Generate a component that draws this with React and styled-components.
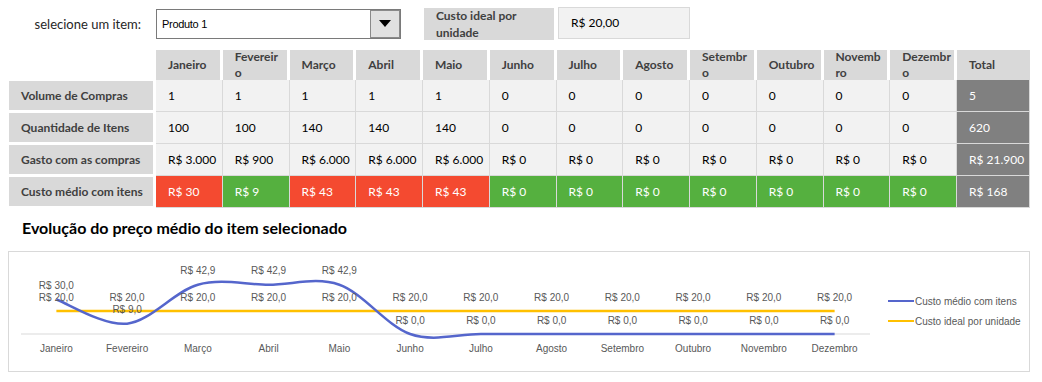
import React from 'react';
import styled, { createGlobalStyle } from 'styled-components';

const meses = ['Janeiro', 'Fevereiro', 'Março', 'Abril', 'Maio', 'Junho', 'Julho', 'Agosto', 'Setembro', 'Outubro', 'Novembro', 'Dezembro'];
// como o Excel quebra os títulos nas colunas estreitas
const titulos = ['Janeiro', 'Fevereir\no', 'Março', 'Abril', 'Maio', 'Junho', 'Julho', 'Agosto', 'Setembr\no', 'Outubro', 'Novemb\nro', 'Dezembr\no'];

const linhas = [
    { nome: 'Volume de Compras', valores: ['1', '1', '1', '1', '1', '0', '0', '0', '0', '0', '0', '0'], total: '5' },
    { nome: 'Quantidade de Itens', valores: ['100', '100', '140', '140', '140', '0', '0', '0', '0', '0', '0', '0'], total: '620' },
    { nome: 'Gasto com as compras', valores: ['R$ 3.000', 'R$ 900', 'R$ 6.000', 'R$ 6.000', 'R$ 6.000', 'R$ 0', 'R$ 0', 'R$ 0', 'R$ 0', 'R$ 0', 'R$ 0', 'R$ 0'], total: 'R$ 21.900' },
];

const medio = [30, 9, 300 / 7, 300 / 7, 300 / 7, 0, 0, 0, 0, 0, 0, 0];
const ideal = 20;

const GlobalStyle = createGlobalStyle`
    body {
        margin: 0;
        background: #ffffff;
        font-family: Lato, "Noto Sans", sans-serif;
    }
`;

export default function App() {
    return (
        <>
            <GlobalStyle />
            <Pagina>
                <Topo>
                    <Rotulo>selecione um item:</Rotulo>
                    <Select>
                        <SelectTexto>Produto 1</SelectTexto>
                        <SelectBotao>
                            <Seta />
                        </SelectBotao>
                    </Select>
                    <CaixaCusto>Custo ideal por unidade</CaixaCusto>
                    <CaixaValor>R$ 20,00</CaixaValor>
                </Topo>

                <Tabela>
                    <Vazio />
                    {titulos.map((t) => <Cabecalho key={t}>{t}</Cabecalho>)}
                    <Cabecalho $total>Total</Cabecalho>

                    {linhas.map((l) => (
                        <React.Fragment key={l.nome}>
                            <NomeLinha>{l.nome}</NomeLinha>
                            {l.valores.map((v, i) => <Celula key={i}>{v}</Celula>)}
                            <Celula $tipo="total">{l.total}</Celula>
                        </React.Fragment>
                    ))}

                    <NomeLinha>Custo médio com itens</NomeLinha>
                    {medio.map((v, i) => (
                        <Celula key={i} $tipo={v > ideal ? 'ruim' : 'bom'}>R$ {Math.round(v)}</Celula>
                    ))}
                    <Celula $tipo="total">R$ 168</Celula>
                </Tabela>

                <Titulo>Evolução do preço médio do item selecionado</Titulo>
                <Grafico />
            </Pagina>
        </>
    );
}

//grafico de linhas suavizado, no estilo do Excel
function Grafico() {
    const x0 = 12;
    const x1 = 861;
    const passo = (x1 - x0) / 12;
    const eixoY = 82;
    const cx = (i) => x0 + passo * (i + 0.5);
    const cy = (v) => eixoY - v * 1.15;
    const fmt = (v) => 'R$ ' + v.toFixed(1).replace('.', ',');

    const pts = medio.map((v, i) => [cx(i), cy(v)]);
    let d = `M${pts[0][0]},${pts[0][1]}`;
    for (let i = 0; i < pts.length - 1; i++) {
        const p0 = pts[i - 1] || pts[i];
        const p1 = pts[i];
        const p2 = pts[i + 1];
        const p3 = pts[i + 2] || p2;
        const c1 = [p1[0] + (p2[0] - p0[0]) / 6, p1[1] + (p2[1] - p0[1]) / 6];
        const c2 = [p2[0] - (p3[0] - p1[0]) / 6, p2[1] - (p3[1] - p1[1]) / 6];
        d += ` C${c1[0]},${c1[1]} ${c2[0]},${c2[1]} ${p2[0]},${p2[1]}`;
    }

    return (
        <CaixaGrafico>
            <svg width="870" height="119" viewBox="0 0 870 119">
                <line x1={x0} x2={x1} y1={eixoY} y2={eixoY} stroke="#d9d9d9" strokeWidth="1" />
                <line x1={cx(0)} x2={cx(11)} y1={cy(ideal)} y2={cy(ideal)} stroke="#ffc000" strokeWidth="2.5" />
                <path d={d} fill="none" stroke="#5566cc" strokeWidth="2.5" />
                <g fontFamily='"Liberation Sans", Arial, sans-serif' fontSize="10" fill="#595959" textAnchor="middle">
                    {medio.map((v, i) => (
                        <React.Fragment key={i}>
                            <text x={cx(i)} y={cy(ideal) - 14} dy="0.35em">{fmt(ideal)}</text>
                            <text x={cx(i)} y={cy(v) - 14} dy="0.35em">{fmt(v)}</text>
                            <text x={cx(i)} y={96} dy="0.35em">{meses[i]}</text>
                        </React.Fragment>
                    ))}
                </g>
            </svg>
            <Legenda>
                <ItemLegenda $cor="#5566cc">Custo médio com itens</ItemLegenda>
                <ItemLegenda $cor="#ffc000">Custo ideal por unidade</ItemLegenda>
            </Legenda>
        </CaixaGrafico>
    );
}

const Pagina = styled.div`
    padding: 7px 0 0 0;
    width: 1042px;
`;

const Topo = styled.div`
    display: flex;
    align-items: center;
    height: 33px;
`;

const Rotulo = styled.div`
    width: 141px;
    text-align: right;
    font-size: 13px;
    color: #262626;
    margin-right: 15px;
`;

const Select = styled.div`
    display: flex;
    width: 245px;
    height: 30px;
    box-sizing: border-box;
    border: 1px solid #7a7a7a;
    background: #fff;
`;

const SelectTexto = styled.div`
    flex: 1;
    display: flex;
    align-items: center;
    padding-left: 5px;
    font-family: "Liberation Sans", Arial, sans-serif;
    font-size: 11px;
    letter-spacing: -0.3px;
    color: #000;
`;

const SelectBotao = styled.div`
    width: 28px;
    display: flex;
    align-items: center;
    justify-content: center;
    background: #e1e1e1;
    border: 1px solid #8a8a8a;
`;

const Seta = styled.div`
    width: 0;
    height: 0;
    border-left: 6px solid transparent;
    border-right: 6px solid transparent;
    border-top: 7px solid #000;
`;

const CaixaCusto = styled.div`
    margin-left: 23px;
    width: 130px;
    height: 32px;
    box-sizing: border-box;
    padding: 0 12px;
    background: #d9d9d9;
    font-size: 12px;
    font-weight: 700;
    line-height: 17px;
    color: #404040;
    display: flex;
    align-items: center;
`;

const CaixaValor = styled.div`
    margin-left: 4px;
    width: 132px;
    height: 32px;
    margin-top: -2px;
    box-sizing: border-box;
    padding-left: 12px;
    background: #f2f2f2;
    border: 1px solid #d9d9d9;
    font-size: 12px;
    color: #000;
    display: flex;
    align-items: center;
`;

const Tabela = styled.div`
    display: grid;
    grid-template-columns: 147px repeat(12, 66.75px) 73px;
    grid-template-rows: 30px repeat(4, 32px);
    margin: 10px 0 0 9px;
    font-size: 12px;
`;

const Vazio = styled.div``;

const Cabecalho = styled.div`
    background: #d9d9d9;
    border-right: ${(p) => (p.$total ? '0' : '3px solid #fff')};
    padding-left: 12px;
    display: flex;
    align-items: center;
    white-space: pre-line;
    line-height: 16px;
    font-weight: 700;
    color: #404040;
`;

const NomeLinha = styled.div`
    background: #d9d9d9;
    margin: 1px 3px 2px 0;
    padding-left: 12px;
    display: flex;
    align-items: center;
    font-weight: 700;
    color: #404040;
`;

const fundos = {
    normal: '#f2f2f2',
    total: '#808080',
    ruim: '#f44a30',
    bom: '#55b03f',
};

const Celula = styled.div`
    background: ${(p) => fundos[p.$tipo || 'normal']};
    color: ${(p) => (p.$tipo ? '#ffffff' : '#000000')};
    border-right: 1px solid #d9d9d9;
    border-bottom: 1px solid #d9d9d9;
    padding-left: 12px;
    display: flex;
    align-items: center;
    white-space: nowrap;
`;

const Titulo = styled.div`
    margin: 10px 0 0 22px;
    font-size: 16px;
    line-height: 20px;
    font-weight: 700;
    color: #000;
`;

const CaixaGrafico = styled.div`
    display: flex;
    margin: 13px 0 0 8px;
    width: 1022px;
    height: 121px;
    box-sizing: border-box;
    border: 1px solid #d9d9d9;
`;

const Legenda = styled.div`
    display: flex;
    flex-direction: column;
    gap: 6px;
    padding-top: 42px;
    margin-left: 9px;
`;

const ItemLegenda = styled.div`
    display: flex;
    align-items: center;
    height: 14px;
    font-family: "Liberation Sans", Arial, sans-serif;
    font-size: 10px;
    color: #595959;

    &::before {
        content: '';
        width: 26px;
        height: 2.5px;
        background: ${(p) => p.$cor};
        margin-right: 1px;
    }
`;
